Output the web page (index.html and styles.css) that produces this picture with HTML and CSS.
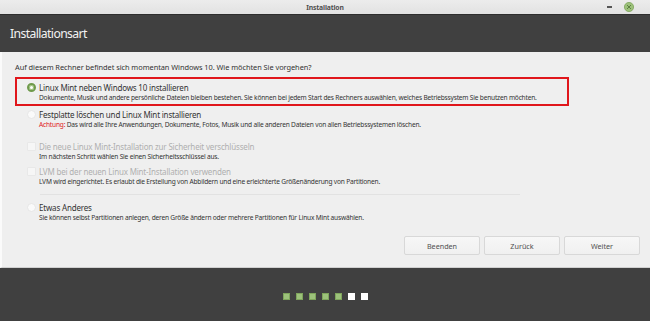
FILE: index.html
```html
<!DOCTYPE html>
<html lang="de">
<head>
    <meta charset="UTF-8">
    <title>Installation</title>
    <link rel="stylesheet" href="styles.css">
</head>
<body>
    <div class="window">
        <div class="titlebar">
            <span class="title">Installation</span>
            <div class="controls">
                <span class="minimize"></span>
                <span class="close">
                    <svg width="10" height="10" viewBox="0 0 10 10">
                        <circle cx="5" cy="5" r="4.6" fill="#9cc17a" stroke="#7fa55c" stroke-width="0.8"/>
                        <path d="M3.3 3.3 L6.7 6.7 M6.7 3.3 L3.3 6.7" stroke="#5d7f43" stroke-width="1" stroke-linecap="round"/>
                    </svg>
                </span>
            </div>
        </div>

        <div class="header">
            <h1>Installationsart</h1>
        </div>

        <div class="content">
            <p class="question">Auf diesem Rechner befindet sich momentan Windows 10. Wie möchten Sie vorgehen?</p>

            <div class="option highlighted">
                <div class="label"><span class="radio checked"></span>Linux Mint neben Windows 10 installieren</div>
                <div class="desc">Dokumente, Musik und andere persönliche Dateien bleiben bestehen. Sie können bei jedem Start des Rechners auswählen, welches Betriebssystem Sie benutzen möchten.</div>
            </div>

            <div class="option erase">
                <div class="label"><span class="radio"></span>Festplatte löschen und Linux Mint installieren</div>
                <div class="desc"><span class="warn">Achtung:</span> Das wird alle Ihre Anwendungen, Dokumente, Fotos, Musik und alle anderen Dateien von allen Betriebssystemen löschen.</div>
            </div>

            <div class="option disabled encrypt">
                <div class="label"><span class="check"></span>Die neue Linux Mint-Installation zur Sicherheit verschlüsseln</div>
                <div class="desc">Im nächsten Schritt wählen Sie einen Sicherheitsschlüssel aus.</div>
            </div>

            <div class="option disabled lvm">
                <div class="label"><span class="check"></span>LVM bei der neuen Linux Mint-Installation verwenden</div>
                <div class="desc">LVM wird eingerichtet. Es erlaubt die Erstellung von Abbildern und eine erleichterte Größenänderung von Partitionen.</div>
            </div>

            <div class="separator"></div>

            <div class="option other">
                <div class="label"><span class="radio"></span>Etwas Anderes</div>
                <div class="desc">Sie können selbst Partitionen anlegen, deren Größe ändern oder mehrere Partitionen für Linux Mint auswählen.</div>
            </div>

            <div class="buttons">
                <button class="btn">Beenden</button>
                <button class="btn">Zurück</button>
                <button class="btn">Weiter</button>
            </div>
        </div>

        <div class="footer">
            <div class="steps">
                <span class="step done"></span>
                <span class="step done"></span>
                <span class="step done"></span>
                <span class="step done"></span>
                <span class="step done"></span>
                <span class="step"></span>
                <span class="step"></span>
            </div>
        </div>
    </div>
</body>
</html>
```

FILE: styles.css
```css
:root {
    --titlebar: #e6e6e6;
    --dark: #404040;
    --content: #efefef;
    --text: #333;
    --muted: #b0b0b0;
    --red: #e0161b;
    --mint: #9cc17a;
    --mint-dark: #6f9a4c;
}

* {
    margin: 0;
    padding: 0;
    box-sizing: border-box;
}

body {
    font-family: 'Noto Sans', 'DejaVu Sans', sans-serif;
    background: var(--dark);
    color: var(--text);
    width: 650px;
    height: 321px;
    overflow: hidden;
}

.window {
    display: flex;
    flex-direction: column;
    height: 321px;
}

/* title bar */
.titlebar {
    height: 15px;
    background: linear-gradient(#ececec, #e2e2e2);
    border-bottom: 1px solid #2e2e2e;
    display: flex;
    justify-content: center;
    align-items: center;
    position: relative;
}

.title {
    font-size: 6.8px;
    font-weight: 700;
    color: #505050;
    letter-spacing: -0.15px;
}

.controls {
    position: absolute;
    right: 16px;
    top: 2px;
    display: flex;
    align-items: center;
    gap: 12px;
}

.minimize {
    width: 5px;
    height: 2px;
    background: #555;
}

.close {
    display: flex;
}

/* header */
.header {
    height: 37px;
    background: var(--dark);
    display: flex;
    align-items: center;
    padding-left: 10px;
}

.header h1 {
    font-size: 12.2px;
    font-weight: 400;
    color: #f2f2f2;
    letter-spacing: -0.6px;
}

/* content */
.content {
    height: 216px;
    background: var(--content);
    border-left: 2px solid #fbfbfb;
    border-bottom: 1px solid #d0d0d0;
    padding: 10px 10px 0 13px;
    display: flex;
    flex-direction: column;
}

.question {
    font-size: 7.4px;
    line-height: 11px;
    letter-spacing: -0.05px;
}

.option {
    padding-left: 12px;
}

.option .label {
    font-size: 8px;
    line-height: 11px;
    letter-spacing: -0.18px;
    display: flex;
    align-items: center;
}

.option .desc {
    font-size: 6.6px;
    line-height: 10px;
    letter-spacing: -0.2px;
    padding-left: 12px;
    white-space: nowrap;
}

.highlighted {
    margin-top: 4px;
    width: 554px;
    border: 2px solid var(--red);
    padding: 3px 0 1px 10px;
}

.erase {
    margin-top: 3px;
}

.encrypt {
    margin-top: 11px;
}

.lvm {
    margin-top: 4px;
}

.other {
    margin-top: 7px;
}

.warn {
    color: var(--red);
}

.disabled .label {
    color: var(--muted);
}

.radio {
    width: 9px;
    height: 9px;
    border-radius: 50%;
    background: #fafafa;
    border: 1px solid #e6e6e6;
    margin-right: 3px;
    flex-shrink: 0;
}

.radio.checked {
    background: #fff;
    border: 2.5px solid var(--mint-dark);
    box-shadow: inset 0 0 0 1px var(--mint);
}

.check {
    width: 9px;
    height: 9px;
    border-radius: 1px;
    background: #f6f6f6;
    border: 1px solid #e8e8e8;
    margin-right: 3px;
    flex-shrink: 0;
}

.separator {
    margin: 7px 0 0 25px;
    width: 480px;
    height: 1px;
    background: #e2e2e2;
}

/* buttons */
.buttons {
    margin-top: 13px;
    display: flex;
    justify-content: flex-end;
    gap: 4px;
}

.btn {
    width: 76px;
    height: 19px;
    font-family: inherit;
    font-size: 7.2px;
    color: #505050;
    background: linear-gradient(#f7f7f7, #f0f0f0);
    border: 1px solid #d8d8d8;
    border-radius: 2px;
}

/* footer */
.footer {
    flex: 1;
    background: var(--dark);
    display: flex;
    justify-content: center;
    padding-top: 25px;
}

.steps {
    display: flex;
    gap: 6px;
    height: 7px;
}

.step {
    width: 7px;
    height: 7px;
    background: #fff;
}

.step.done {
    background: var(--mint);
    border: 1px solid #7fa55c;
}
```
